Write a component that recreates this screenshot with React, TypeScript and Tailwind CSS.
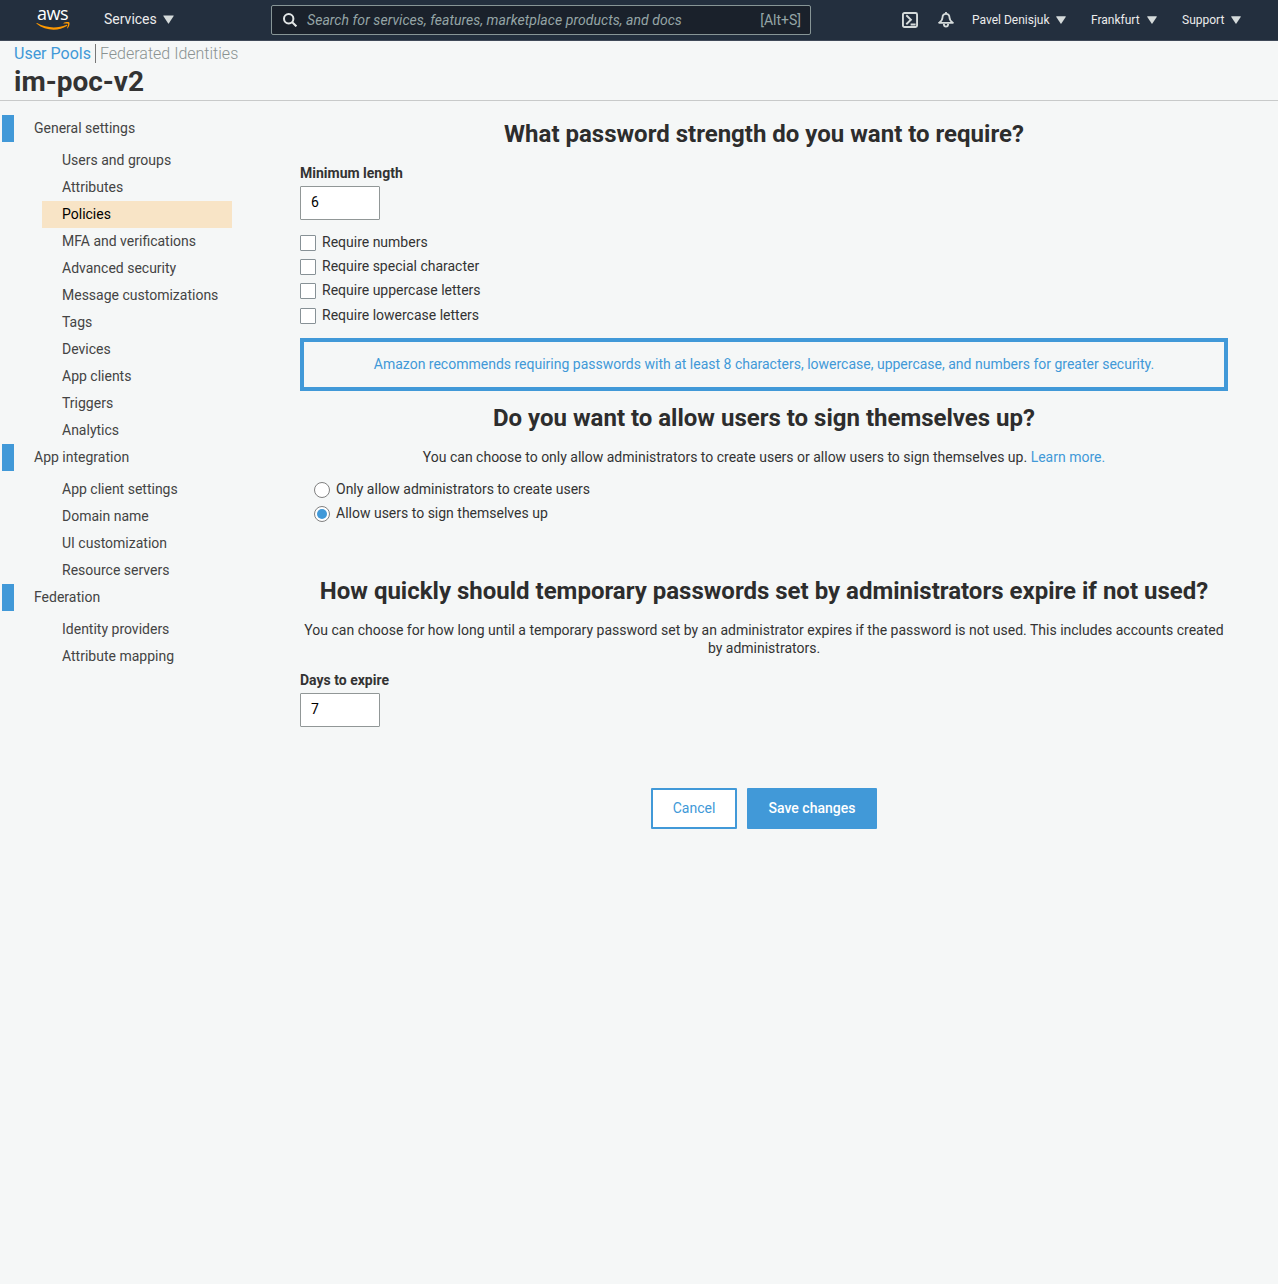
import React from "react";

const groups = [
  {
    title: "General settings",
    items: [
      "Users and groups",
      "Attributes",
      "Policies",
      "MFA and verifications",
      "Advanced security",
      "Message customizations",
      "Tags",
      "Devices",
      "App clients",
      "Triggers",
      "Analytics",
    ],
  },
  {
    title: "App integration",
    items: ["App client settings", "Domain name", "UI customization", "Resource servers"],
  },
  { title: "Federation", items: ["Identity providers", "Attribute mapping"] },
];

function Caret({ className }: { className: string }) {
  return (
    <svg viewBox="0 0 10 8" className={`shrink-0 fill-[#d5dbdb] ${className}`}>
      <path d="M0.600 0.300h8.800q.6 0 .3.600L5.400 7.500q-.4.600-.8 0L.3.900q-.3-.6.300-.6z" />
    </svg>
  );
}

function TopBar() {
  return (
    <header className="flex h-[41px] items-start border-b border-[#3f4958] bg-[#232f3e] text-[#ececec]">
      <a className="ml-[36px] mt-[5px] flex h-[28px] w-[35px] flex-col items-center">
        <span className="h-[17px] w-[33px] font-['Open_Sans','Noto_Sans',sans-serif] text-[18px] font-medium leading-[17px] tracking-[-0.5px] text-white">
          aws
        </span>
        <svg viewBox="0 0 35 9" className="h-[9px] w-[35px]" fill="#ff9900">
          <path d="M1 1.100C10.500 6.300 21.500 6.600 30.200 2.900c1-.4 1.500.5.700 1.100C22.600 9.300 9.500 9.100.7 1.700.2 1.300.5.800 1 1.100z" />
          <path d="M27.500 1.100c1.700-1.200 4.600-1.300 5.600-.8 1 .7.200 4.200-1.500 6-.4.3-.7.100-.5-.3.500-1.300 1.300-3.600.9-4.200-.5-.6-2.900-.4-4.200-.2-.5 0-.6-.2-.3-.5z" />
        </svg>
      </a>
      <div className="ml-[33px] mt-[10px] flex h-[18px] w-[70px] items-center text-[14px] leading-[18px]">
        <span>Services</span>
        <Caret className="ml-auto mt-px h-[9px] w-[11px]" />
      </div>
      <div className="ml-[97px] mt-[5px] flex h-[30px] w-[540px] items-center rounded-[2px] border border-[#879596] bg-[#1a212b] pl-[11px] pr-[9px] text-[14px] text-[#95a5a6]">
        <svg viewBox="0 0 14 14" className="size-[14px]" fill="none" stroke="#e3e7e7" strokeWidth="2">
          <circle cx="5.700" cy="5.700" r="4.700" />
          <path d="M9 9l4.400 4.400" />
        </svg>
        <span className="ml-[10px] italic tracking-[0.06px]">
          Search for services, features, marketplace products, and docs
        </span>
        <span className="ml-auto">[Alt+S]</span>
      </div>
      <svg viewBox="0 0 16 16" className="ml-[91px] mt-[12px] size-[16px]" fill="none" stroke="#d5dbdb" strokeWidth="1.900">
        <rect x="0.950" y="0.950" width="14.100" height="14.100" rx="1.500" />
        <path d="M4.300 3.200l4.600 4.500-4.600 4.500M8.600 12.500h5" />
      </svg>
      <svg viewBox="0 0 16 16" className="ml-[20px] mt-[12px] size-[16px]" fill="none" stroke="#d5dbdb" strokeWidth="1.800" strokeLinejoin="round">
        <path d="M8 0v2M8 1.800c-2.300 0-3.500 1.600-3.500 3.700 0 2.800-1.300 3.700-3.400 5.300h13.800c-2.100-1.600-3.400-2.500-3.400-5.300 0-2.100-1.200-3.700-3.500-3.700z" />
        <path d="M5.800 11.900c.1 1.900 1 2.700 2.200 2.700s2.100-.8 2.200-2.700" />
      </svg>
      <nav className="ml-[18px] mt-[11px] flex text-[12px] leading-[18px]">
        <span className="flex w-[94px] items-center justify-between">
          Pavel Denisjuk <Caret className="h-[8px] w-[10px]" />
        </span>
        <span className="ml-[25px] flex w-[66px] items-center justify-between">
          Frankfurt <Caret className="h-[8px] w-[10px]" />
        </span>
        <span className="ml-[25px] flex w-[59px] items-center justify-between">
          Support <Caret className="h-[8px] w-[10px]" />
        </span>
      </nav>
    </header>
  );
}

function Sidebar() {
  return (
    <aside className="w-[232px] shrink-0 pt-[14px] text-[14px] leading-[27px] text-[#444]">
      {groups.map((g) => (
        <section key={g.title}>
          <h3 className="ml-[2px] border-l-[12px] border-[#4199d8] pl-[20px]">{g.title}</h3>
          <ul className="ml-[42px] mt-[5px]">
            {g.items.map((item) => (
              <li key={item} className={item === "Policies" ? "bg-[#f8e4c6] pl-[20px] text-black" : "pl-[20px]"}>
                {item}
              </li>
            ))}
          </ul>
        </section>
      ))}
    </aside>
  );
}

function Check({ label }: { label: string }) {
  return (
    <label className="flex h-[18px] gap-[6px]">
      <span className="mt-[2px] size-[16px] rounded-[1px] border border-[#879196] bg-white" />
      {label}
    </label>
  );
}

function Radio({ label, on }: { label: string; on?: boolean }) {
  return (
    <label className="flex h-[18px] gap-[6px]">
      <span className="mt-[2px] flex size-[16px] items-center justify-center rounded-full border border-[#808080] bg-white">
        {on && <span className="size-[10px] rounded-full bg-[#4199d8]" />}
      </span>
      {label}
    </label>
  );
}

function NumberField({ label, value }: { label: string; value: string }) {
  return (
    <div>
      <div className="font-bold">{label}</div>
      <div className="mt-[4px] h-[34px] w-[80px] rounded-[1px] border border-[#919797] bg-white pl-[10px] leading-[31px] text-black">
        {value}
      </div>
    </div>
  );
}

const headingClass = "text-center text-[24px] font-bold leading-[28px] text-[#2d2d2d]";

export default function App() {
  return (
    <div className="min-h-[1284px] w-[1278px] bg-[#f5f7f7] font-[Roboto,'Liberation_Sans',sans-serif] text-[#333]">
      <TopBar />
      <div className="h-[60px] border-b border-[#c8caca] pl-[14px] pt-[3px]">
        <div className="flex h-[19px] text-[16px] font-light leading-[19px] text-[#8a9292]">
          <span className="w-[82px] border-r border-[#777] font-normal text-[#4199d8]">User Pools</span>
          <span className="ml-[4px]">Federated Identities</span>
        </div>
        <h1 className="mt-[2px] text-[28px] font-bold leading-[33px] text-[#333]">im-poc-v2</h1>
      </div>
      <div className="flex">
        <Sidebar />
        <main className="ml-[68px] w-[928px] pt-[19px] text-[14px] leading-[18px]">
          <h2 className={headingClass}>What password strength do you want to require?</h2>
          <div className="mt-[16px]">
            <NumberField label="Minimum length" value="6" />
          </div>
          <div className="mt-[13px]">
            <Check label="Require numbers" />
            <div className="mt-[6px]">
              <Check label="Require special character" />
            </div>
            <div className="mt-[6px]">
              <Check label="Require uppercase letters" />
            </div>
            <div className="mt-[7px]">
              <Check label="Require lowercase letters" />
            </div>
          </div>
          <div className="mt-[14px] h-[53px] border-4 border-[#4199d8] pt-[13px] text-center text-[#4199d8]">
            Amazon recommends requiring passwords with at least 8 characters, lowercase, uppercase, and numbers for greater
            security.
          </div>
          <h2 className={`mt-[13px] ${headingClass}`}>Do you want to allow users to sign themselves up?</h2>
          <p className="mt-[16px] text-center">
            You can choose to only allow administrators to create users or allow users to sign themselves up.{" "}
            <a className="text-[#4199d8]">Learn more.</a>
          </p>
          <div className="ml-[14px] mt-[14px] flex flex-col gap-[6px]">
            <Radio label="Only allow administrators to create users" />
            <Radio label="Allow users to sign themselves up" on />
          </div>
          <h2 className={`mt-[55px] ${headingClass}`}>
            How quickly should temporary passwords set by administrators expire if not used?
          </h2>
          <p className="mt-[16px] text-center">
            You can choose for how long until a temporary password set by an administrator expires if the password is not
            used. This includes accounts created
            <br />
            by administrators.
          </p>
          <div className="mt-[14px]">
            <NumberField label="Days to expire" value="7" />
          </div>
          <div className="mt-[61px] flex justify-center gap-[10px]">
            <button className="h-[41px] w-[86px] rounded-[1px] border-2 border-[#4199d8] bg-white pb-[2px] text-[#4199d8]">
              Cancel
            </button>
            <button className="h-[41px] w-[130px] rounded-[1px] bg-[#4199d8] pb-[2px] font-medium text-white">
              Save changes
            </button>
          </div>
        </main>
      </div>
    </div>
  );
}
